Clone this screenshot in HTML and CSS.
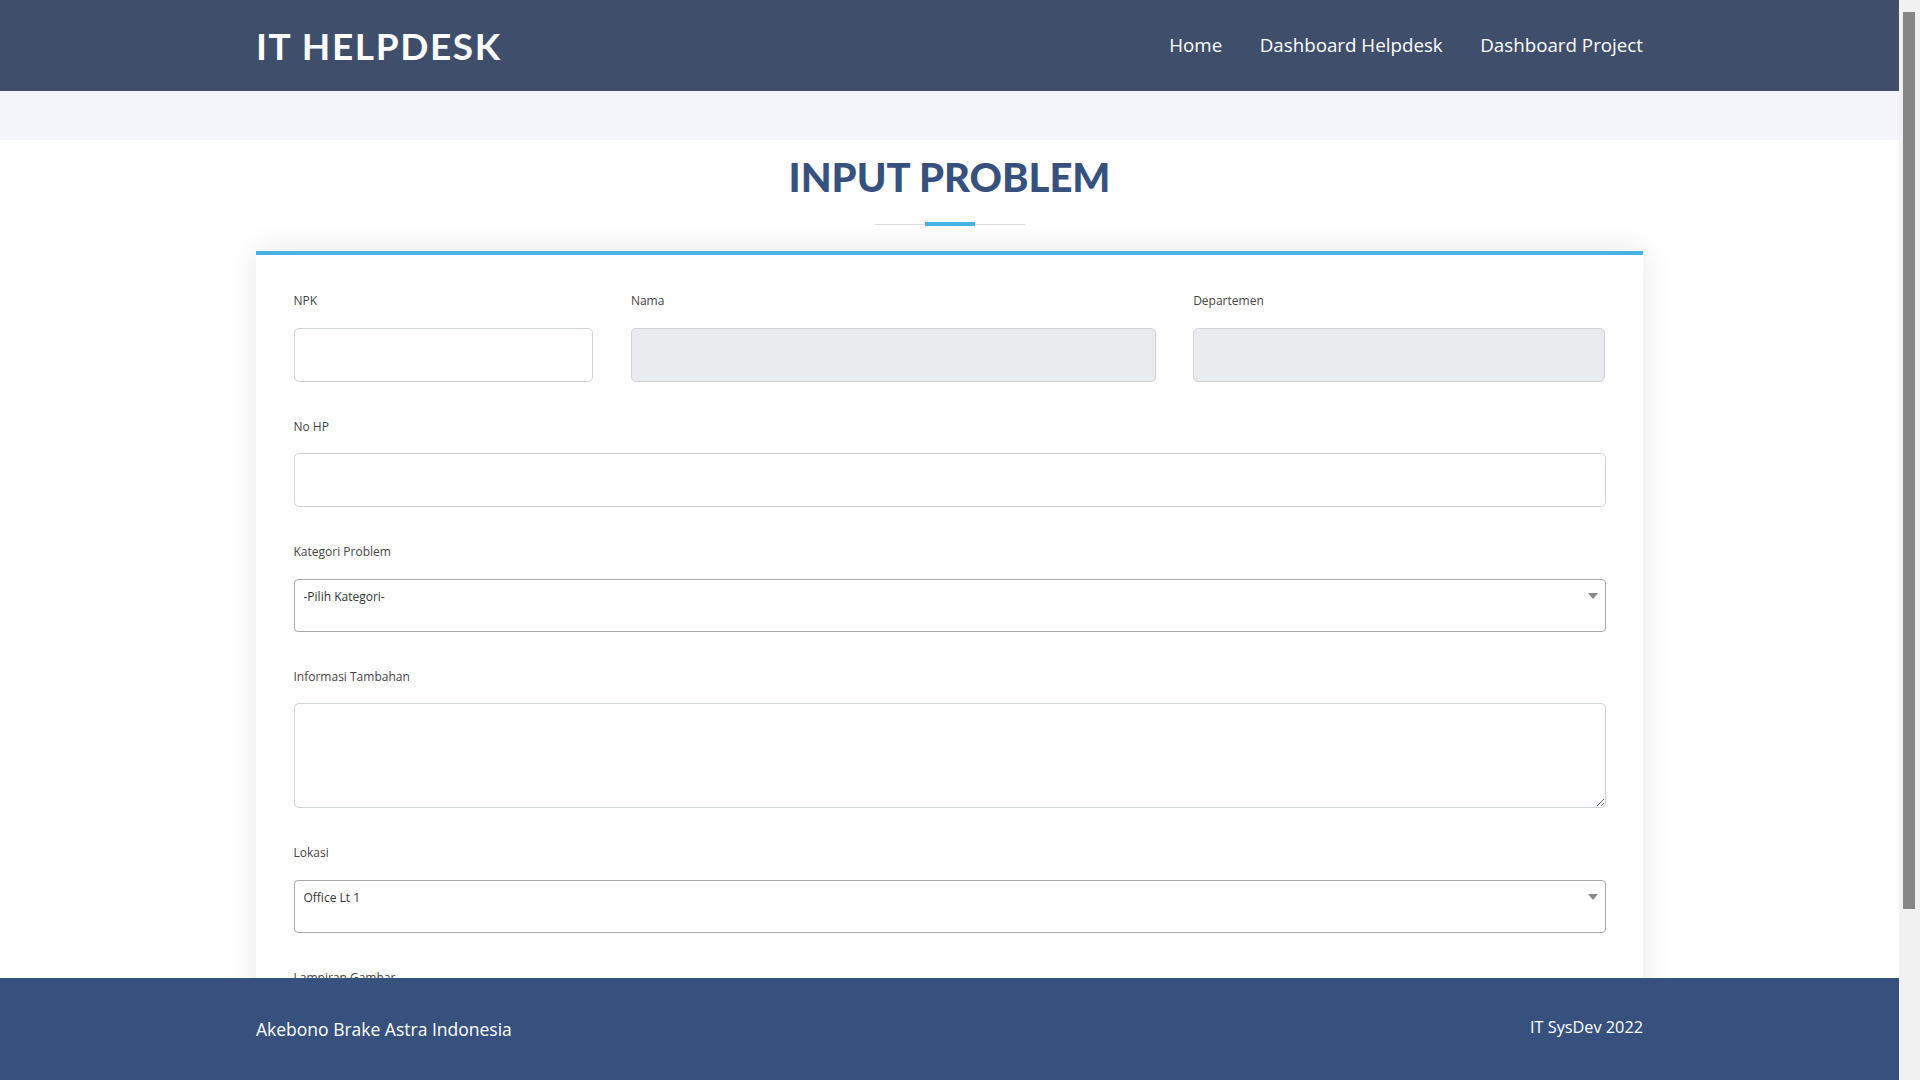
FILE: index.html
```html
<!DOCTYPE html>
<html lang="id">
<head>
<meta charset="utf-8">
<title>IT Helpdesk - Input Problem</title>
<link rel="stylesheet" href="styles.css">
</head>
<body>
<header class="topbar">
  <div class="container topbar-inner">
    <a class="logo" href="#">IT HELPDESK</a>
    <nav class="nav">
      <a href="#">Home</a>
      <a href="#">Dashboard Helpdesk</a>
      <a href="#">Dashboard Project</a>
    </nav>
  </div>
</header>
<div class="band"></div>
<main class="section">
  <div class="container">
    <div class="section-title">
      <h2>Input Problem</h2>
      <div class="title-rule"><span></span></div>
    </div>
    <form class="card">
      <div class="row">
        <div class="col col-3 form-group">
          <label for="npk">NPK</label>
          <input id="npk" class="form-control" type="text">
        </div>
        <div class="col col-5 form-group">
          <label for="nama">Nama</label>
          <input id="nama" class="form-control" type="text" readonly>
        </div>
        <div class="col col-4 form-group">
          <label for="dept">Departemen</label>
          <input id="dept" class="form-control" type="text" readonly>
        </div>
      </div>
      <div class="form-group">
        <label for="nohp">No HP</label>
        <input id="nohp" class="form-control" type="text">
      </div>
      <div class="form-group">
        <label for="kategori">Kategori Problem</label>
        <div class="select-wrap">
          <select id="kategori" class="form-select">
            <option>-Pilih Kategori-</option>
            <option>Hardware</option>
            <option>Software</option>
            <option>Network</option>
          </select>
          <svg class="select-arrow" width="10" height="6" viewBox="0 0 10 6"><path d="M0 0H10L5 6Z" fill="#888"/></svg>
        </div>
      </div>
      <div class="form-group">
        <label for="info">Informasi Tambahan</label>
        <textarea id="info" class="form-control textarea"></textarea>
      </div>
      <div class="form-group">
        <label for="lokasi">Lokasi</label>
        <div class="select-wrap">
          <select id="lokasi" class="form-select">
            <option>Office Lt 1</option>
            <option>Office Lt 2</option>
            <option>Plant</option>
          </select>
          <svg class="select-arrow" width="10" height="6" viewBox="0 0 10 6"><path d="M0 0H10L5 6Z" fill="#888"/></svg>
        </div>
      </div>
      <div class="form-group last-group">
        <label for="lampiran">Lampiran Gambar</label>
        <input id="lampiran" class="file-input" type="file">
      </div>
      <div class="actions">
        <button type="submit" class="btn">Submit</button>
      </div>
    </form>
  </div>
</main>
<footer class="footer">
  <div class="container footer-inner">
    <span class="footer-left">Akebono Brake Astra Indonesia</span>
    <span class="footer-right">IT SysDev 2022</span>
  </div>
</footer>
<div class="scrollbar" aria-hidden="true"><div class="scrollbar-thumb"></div></div>
</body>
</html>
```
FILE: styles.css
```css
html {
  overflow: hidden;
}

body {
  margin: 0 21px 0 0;
  font-family: "Open Sans", "Liberation Sans", sans-serif;
  color: #444444;
  background: #ffffff;
}

.container {
  width: 1387px;
  margin: 0 auto;
}

/* Header */
.topbar {
  background: #3e4e6b;
  height: 91px;
}

.topbar-inner {
  height: 100%;
  display: flex;
  align-items: center;
  justify-content: space-between;
}

.logo {
  font-family: Lato, "Open Sans", sans-serif;
  font-size: 37px;
  font-weight: 700;
  letter-spacing: 1.6px;
  line-height: 1;
  color: #ffffff;
  text-decoration: none;
  margin-top: -1px;
}

.nav {
  display: flex;
  gap: 37.5px;
}

.nav a {
  color: #ffffff;
  font-size: 18.75px;
  text-decoration: none;
  line-height: 1.5;
}

.band {
  background: #f3f5fa;
  height: 49px;
}

/* Section */
.section {
  padding: 13px 0 116px;
}

.section-title h2 {
  margin: 0;
  font-family: Lato, "Open Sans", sans-serif;
  font-weight: 900;
  font-size: 40px;
  line-height: 48px;
  color: #37517e;
  text-align: center;
  text-transform: uppercase;
}

.title-rule {
  width: 150px;
  height: 4px;
  margin: 21px auto 0;
  background: linear-gradient(#dddddd, #dddddd) center / 100% 1px no-repeat;
  display: flex;
  justify-content: center;
}

.title-rule span {
  width: 50px;
  height: 4px;
  background: #47b2e4;
}

/* Card form */
.card {
  margin-top: 25px;
  background: #ffffff;
  border-top: 4px solid #47b2e4;
  box-shadow: 0 0 30px rgba(0, 0, 0, 0.1);
  padding: 37px 37.5px 38px;
}

.row {
  display: flex;
  margin: 0 -18.75px;
}

.col {
  box-sizing: border-box;
  padding: 0 18.75px;
}

.col-3 { flex: 0 0 25%; }
.col-5 { flex: 0 0 41.6667%; }
.col-4 { flex: 0 0 33.3333%; }

.form-group {
  margin-bottom: 36px;
}

.form-group label {
  display: block;
  font-size: 12px;
  line-height: 18px;
  margin-bottom: 17.5px;
  color: #444444;
}

.form-control {
  display: block;
  width: 100%;
  height: 54px;
  box-sizing: border-box;
  border: 1px solid #ced4da;
  border-radius: 5px;
  padding: 0 12px;
  font-family: "Open Sans", sans-serif;
  font-size: 12px;
  color: #333333;
  background: #ffffff;
  outline: none;
}

.form-control[readonly] {
  background: #e9ecef;
}

.textarea {
  height: 105px;
  padding: 10px 12px;
}

.select-wrap {
  position: relative;
}

.form-select {
  appearance: none;
  -webkit-appearance: none;
  display: block;
  width: 100%;
  height: 53px;
  box-sizing: border-box;
  border: 1px solid #a9a9a9;
  border-radius: 4px;
  padding: 8px 30px 25px 9px;
  font-family: "Open Sans", sans-serif;
  font-size: 12px;
  line-height: 18px;
  color: #333333;
  background: #ffffff;
  outline: none;
}

.select-arrow {
  position: absolute;
  right: 8px;
  top: 14px;
  pointer-events: none;
}

.file-input {
  font-family: "Open Sans", sans-serif;
  font-size: 13px;
  height: 30px;
}

.actions {
  text-align: center;
}

.btn {
  background: #47b2e4;
  color: #ffffff;
  border: 0;
  border-radius: 50px;
  padding: 12px 40px;
  font-family: "Open Sans", sans-serif;
  font-size: 16px;
}

/* Footer */
.footer {
  position: fixed;
  left: 0;
  right: 21px;
  bottom: 0;
  height: 102px;
  background: #37517e;
  color: #ffffff;
}

.footer-inner {
  height: 100%;
  display: flex;
  align-items: center;
  justify-content: space-between;
}

.footer-left {
  font-size: 17.5px;
}

.footer-right {
  font-size: 16.25px;
  margin-top: -4px;
}

/* Window scrollbar (as seen in the reference) */
.scrollbar {
  position: fixed;
  top: 0;
  right: 0;
  bottom: 0;
  width: 21px;
  background: #f1f1f1;
}

.scrollbar-thumb {
  margin: 12px 5px 0 4px;
  height: 897px;
  background: #858585;
}
```
